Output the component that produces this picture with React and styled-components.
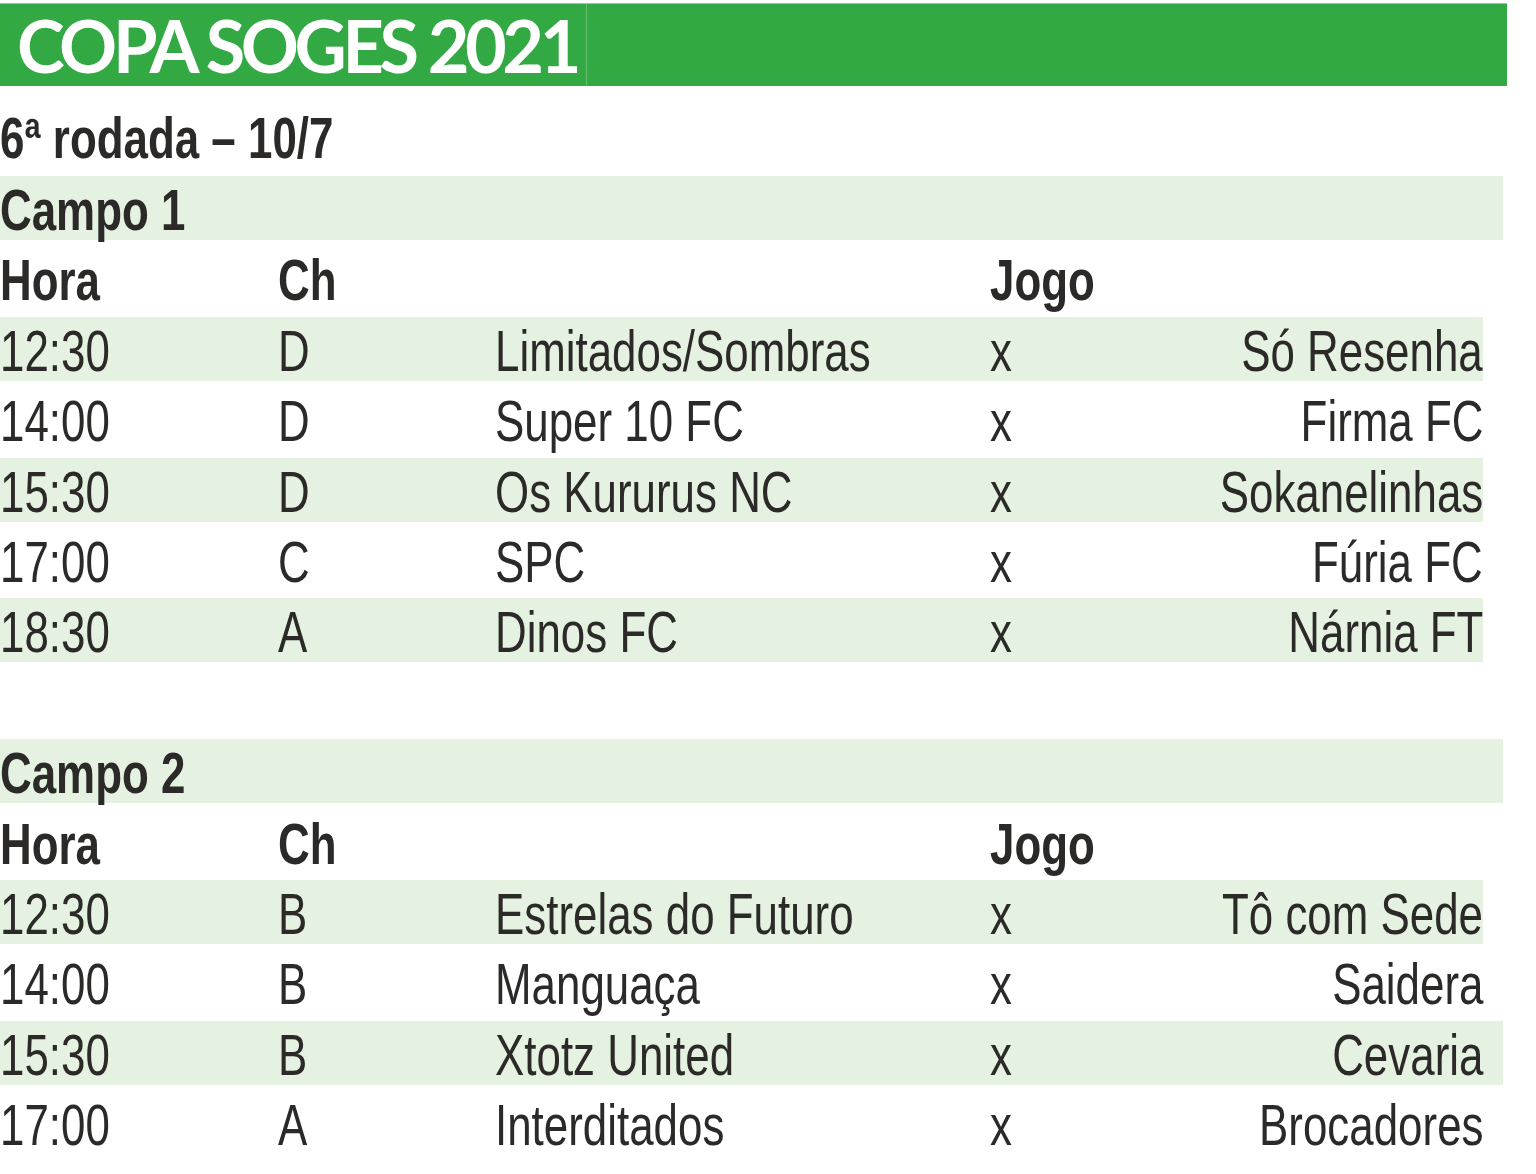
import styled, { createGlobalStyle } from 'styled-components';

const campo1 = [
    { hora: '12:30', ch: 'D', casa: 'Limitados/Sombras', fora: 'Só Resenha' },
    { hora: '14:00', ch: 'D', casa: 'Super 10 FC', fora: 'Firma FC' },
    { hora: '15:30', ch: 'D', casa: 'Os Kururus NC', fora: 'Sokanelinhas' },
    { hora: '17:00', ch: 'C', casa: 'SPC', fora: 'Fúria FC' },
    { hora: '18:30', ch: 'A', casa: 'Dinos FC', fora: 'Nárnia FT' },
]

const campo2 = [
    { hora: '12:30', ch: 'B', casa: 'Estrelas do Futuro', fora: 'Tô com Sede' },
    { hora: '14:00', ch: 'B', casa: 'Manguaça', fora: 'Saidera' },
    { hora: '15:30', ch: 'B', casa: 'Xtotz United', fora: 'Cevaria', wide: true },
    { hora: '17:00', ch: 'A', casa: 'Interditados', fora: 'Brocadores' },
]

const Campo = ({ nome, jogos }) => {
    return (
        <>
            <Row $shaded $wide>
                <Label><Narrow>{nome}</Narrow></Label>
            </Row>
            <Row>
                <Head><Narrow>Hora</Narrow></Head>
                <Head><Narrow>Ch</Narrow></Head>
                <span />
                <Head className="jogo"><Narrow>Jogo</Narrow></Head>
            </Row>
            {jogos.map((j, i) => (
                <Row key={j.hora} $shaded={i % 2 === 0} $wide={j.wide}>
                    <Cell><Narrow>{j.hora}</Narrow></Cell>
                    <Cell><Narrow>{j.ch}</Narrow></Cell>
                    <Cell><Narrow>{j.casa}</Narrow></Cell>
                    <Cell><Narrow>x</Narrow></Cell>
                    <Cell className="fora"><Narrow $right>{j.fora}</Narrow></Cell>
                </Row>
            ))}
        </>
    )
}

const App = () => {
    return (
        <Page>
            <GlobalStyle />
            <Header>
                <TitleBlock>
                    <h1>COPA SOGES 2021</h1>
                </TitleBlock>
                <Filler />
            </Header>
            <Rodada><Narrow>6ª rodada – 10/7</Narrow></Rodada>
            <Campo nome="Campo 1" jogos={campo1} />
            <Row />
            <Campo nome="Campo 2" jogos={campo2} />
        </Page>
    )
}

//styles
const GlobalStyle = createGlobalStyle`
    body{
        margin: 0;
        background: #ffffff;
    }
`

const Page = styled.div`
    width: 1536px;
    height: 1174px;
    overflow: hidden;
    color: #2b2a29;
    font-family: "Liberation Sans", Arial, sans-serif;
    font-size: 57px;
`

// condensed look: Helvetica Condensed ~ Arial squeezed horizontally
const Narrow = styled.span`
    display: inline-block;
    transform: scaleX(0.77);
    transform-origin: ${p => p.$right ? 'right' : 'left'} center;
`

const Header = styled.div`
    margin-top: 3px;
    width: 1507px;
    height: 83px;
    display: flex;
    background: #33a944;
    border-top: 1px solid #8ccf93;
    box-sizing: border-box;
`

const TitleBlock = styled.div`
    width: 586px;
    border-right: 1px solid #62bd6c;
    h1{
        margin: 0;
        padding-left: 17px;
        font-family: "Lato", sans-serif;
        font-weight: 700;
        font-size: 72px;
        line-height: 82px;
        letter-spacing: -4.4px;
        color: #ffffff;
        white-space: nowrap;
    }
`

const Filler = styled.div`
    flex: 1;
`

const Rodada = styled.div`
    height: 90px;
    box-sizing: border-box;
    padding-top: 20px;
    line-height: 64px;
    font-weight: 700;
    white-space: nowrap;
`

const Row = styled.div`
    width: 1503px;
    height: 70.4px;
    box-sizing: border-box;
    padding-top: 2px;
    line-height: 64px;
    display: grid;
    grid-template-columns: 278px 217px 495px 40px 453px;
    white-space: nowrap;
    background: ${p => p.$shaded ? 'linear-gradient(#e5f2e1, #e5f2e1)' : 'none'};
    background-repeat: no-repeat;
    background-size: ${p => p.$wide ? '1503px' : '1483px'} 64px;
`

const Label = styled.div`
    grid-column: 1 / -1;
    font-weight: 700;
`

const Head = styled.div`
    font-weight: 700;
    &.jogo{
        grid-column: 4 / span 2;
    }
`

const Cell = styled.div`
    &.fora{
        text-align: right;
    }
`

export default App;
